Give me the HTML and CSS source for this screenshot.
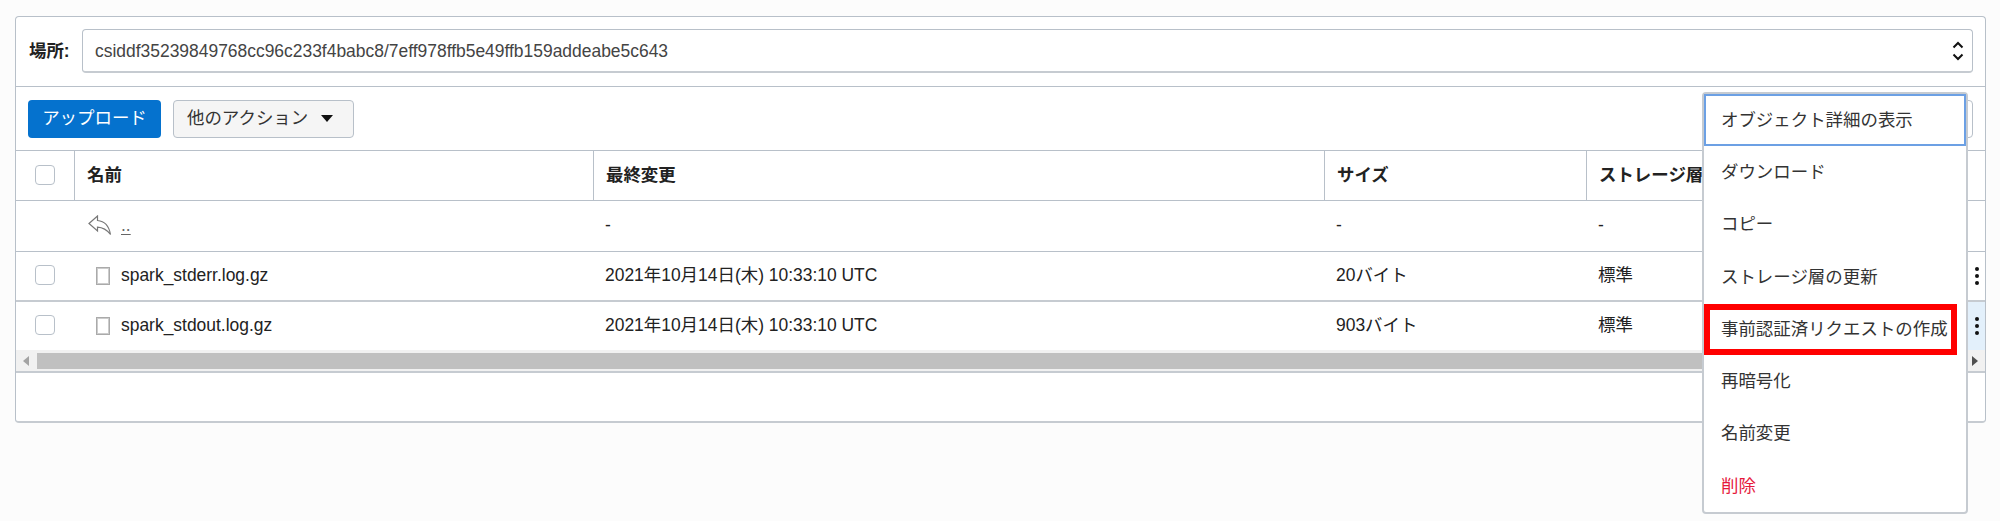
FILE: index.html
```html
<!DOCTYPE html>
<html lang="ja">
<head>
<meta charset="utf-8">
<title>オブジェクト</title>
<link rel="stylesheet" href="styles.css">
</head>
<body>
<main class="panel">
  <div class="location">
    <label class="location-label">場所:</label>
    <div class="location-select">
      <span>csiddf35239849768cc96c233f4babc8/7eff978ffb5e49ffb159addeabe5c643</span>
      <svg class="updown" width="12" height="20" viewBox="0 0 12 20"><path d="M1.500 6.500 6 2l4.500 4.500M1.500 13.500 6 18l4.500-4.500"/></svg>
    </div>
  </div>
  <div class="toolbar">
    <button class="btn btn-primary">アップロード</button>
    <button class="btn btn-more">他のアクション<svg width="12" height="7" viewBox="0 0 12 7"><path d="M0 0h12L6 7z"/></svg></button>
    <div class="search"></div>
  </div>
  <div class="row head">
    <div class="cell check"><span class="box"></span></div>
    <div class="cell">名前</div>
    <div class="cell">最終変更</div>
    <div class="cell">サイズ</div>
    <div class="cell">ストレージ層</div>
  </div>
  <div class="row up">
    <div class="cell check"></div>
    <div class="cell name"><svg class="back" width="24" height="21" viewBox="0 0 24 21"><path d="M1 8.500 9.500 1v4.500C16 6 21 11 22.500 19.500 19 15 15 12.500 9.500 12.200V16z"/></svg><a class="parent">..</a></div>
    <div class="cell">-</div>
    <div class="cell">-</div>
    <div class="cell">-</div>
  </div>
  <div class="row first">
    <div class="cell check"><span class="box"></span></div>
    <div class="cell name"><span class="file"></span>spark_stderr.log.gz</div>
    <div class="cell">2021年10月14日(木) 10:33:10 UTC</div>
    <div class="cell">20バイト</div>
    <div class="cell">標準</div>
    <div class="dots"><i></i><i></i><i></i></div>
  </div>
  <div class="row last">
    <div class="cell check"><span class="box"></span></div>
    <div class="cell name"><span class="file"></span>spark_stdout.log.gz</div>
    <div class="cell">2021年10月14日(木) 10:33:10 UTC</div>
    <div class="cell">903バイト</div>
    <div class="cell">標準</div>
    <div class="dots active"><i></i><i></i><i></i></div>
  </div>
  <div class="scrollbar">
    <svg width="6" height="10" viewBox="0 0 6 10"><path fill="#a3a3a3" d="M6 0v10L0 5z"/></svg>
    <div class="thumb"></div>
    <svg width="6" height="10" viewBox="0 0 6 10"><path fill="#505050" d="M0 0v10l6-5z"/></svg>
  </div>
</main>
<ul class="menu">
  <li class="focused">オブジェクト詳細の表示</li>
  <li>ダウンロード</li>
  <li>コピー</li>
  <li>ストレージ層の更新</li>
  <li class="marked">事前認証済リクエストの作成</li>
  <li>再暗号化</li>
  <li>名前変更</li>
  <li class="danger">削除</li>
</ul>
</body>
</html>
```
FILE: styles.css
```css
*, *::before, *::after { box-sizing: border-box; }
body {
  margin: 0;
  height: 521px;
  padding: 16px 14px 0 15px;
  overflow: hidden;
  background: #fcfcfc;
  color: #222;
  font: 17.45px/26px "Liberation Sans", "Noto Sans CJK JP", sans-serif;
}
.panel {
  height: 407px;
  background: #fff;
  border: 1px solid #b8c0c9;
  border-bottom: 2px solid #c6cbd1;
  border-radius: 4px;
}
.location {
  display: flex;
  align-items: center;
  height: 70px;
  padding: 0 12px 2px 13px;
  border-bottom: 1px solid #b8c0c9;
}
.location-label { width: 53px; font-weight: bold; white-space: nowrap; }
.location-select {
  flex: 1;
  display: flex;
  align-items: center;
  justify-content: space-between;
  height: 44px;
  padding: 1px 8px 0 12px;
  border: 1px solid #b8c0c9;
  border-bottom: 2px solid #c6cbd1;
  border-radius: 4px;
  color: #444;
}
.updown { fill: none; stroke: #111; stroke-width: 2; }
.toolbar {
  display: flex;
  align-items: center;
  height: 64px;
  padding: 0 12px;
  border-bottom: 1px solid #b8c0c9;
}
.btn {
  height: 38px;
  padding: 0 0 1px;
  border-radius: 4px;
  font: inherit;
  border: 0;
  white-space: nowrap;
}
.btn-primary { width: 133px; background: #0572ce; color: #fff; }
.btn-more {
  display: flex;
  align-items: center;
  gap: 13px;
  width: 181px;
  margin-left: 12px;
  padding-left: 13px;
  background: #f5f5f5;
  border: 1px solid #b8c0c9;
  color: #333;
}
.btn-more svg { fill: #111; }
.search {
  width: 200px;
  height: 38px;
  margin-left: auto;
  border: 1px solid #b8c0c9;
  border-radius: 4px;
}
.row {
  display: grid;
  grid-template-columns: 58px 519px 731px 262px 1fr 18px;
  height: 50px;
  border-bottom: 1px solid #b8c0c9;
}
.cell { display: flex; align-items: center; padding: 0 0 2px 12px; white-space: nowrap; }
.check { padding-left: 19px; }
.head { font-weight: bold; }
.head .cell + .cell { border-left: 1px solid #b8c0c9; }
.up { height: 51px; }
.first { border-bottom: 2px solid #c6cbd1; }
.last { height: 48px; border: 0; }
.box { width: 20px; height: 20px; border: 1.5px solid #b8c0c9; border-radius: 4px; }
.cell.name { padding-left: 14px; }
.back { fill: none; stroke: #777; stroke-width: 1.2; margin-right: 9px; }
.parent { color: #666; text-decoration: underline; text-underline-offset: 3px; }
.file { width: 14px; height: 18px; margin: 1px 11px 0 8px; border: 1px solid #aaa; outline: 1px solid #ccc; outline-offset: -2px; }
.dots {
  grid-column: 6;
  display: flex;
  flex-direction: column;
  align-items: center;
  justify-content: center;
  gap: 3px;
  padding: 0 0 1px 1px;
}
.dots i { width: 4px; height: 4px; border-radius: 50%; background: #111; }
.dots.active { background: #e3f0fb; }
.scrollbar {
  display: flex;
  align-items: center;
  gap: 8px;
  height: 23px;
  padding: 0 7px;
  background: #f1f1f1;
  border-bottom: 2px solid #c6cbd1;
}
.thumb { flex: 1; height: 16px; background: #c0c0c0; }
.menu {
  position: absolute;
  left: 1702px;
  top: 92px;
  width: 266px;
  height: 422px;
  margin: 0;
  padding: 0;
  list-style: none;
  background: #fff;
  border: 2px solid #c6cbd1;
  border-radius: 4px;
  color: #333;
}
.menu li {
  position: relative;
  display: flex;
  align-items: center;
  height: 52.3px;
  padding: 0 0 1px 17px;
  white-space: nowrap;
}
.menu .focused::before {
  content: "";
  position: absolute;
  inset: 0;
  border: 2px solid #6ca0e4;
}
.menu .marked::after {
  content: "";
  position: absolute;
  left: 0;
  top: 1px;
  width: 253px;
  height: 51px;
  border: 6px solid #f00;
}
.menu .danger { color: #e6193c; }
```
